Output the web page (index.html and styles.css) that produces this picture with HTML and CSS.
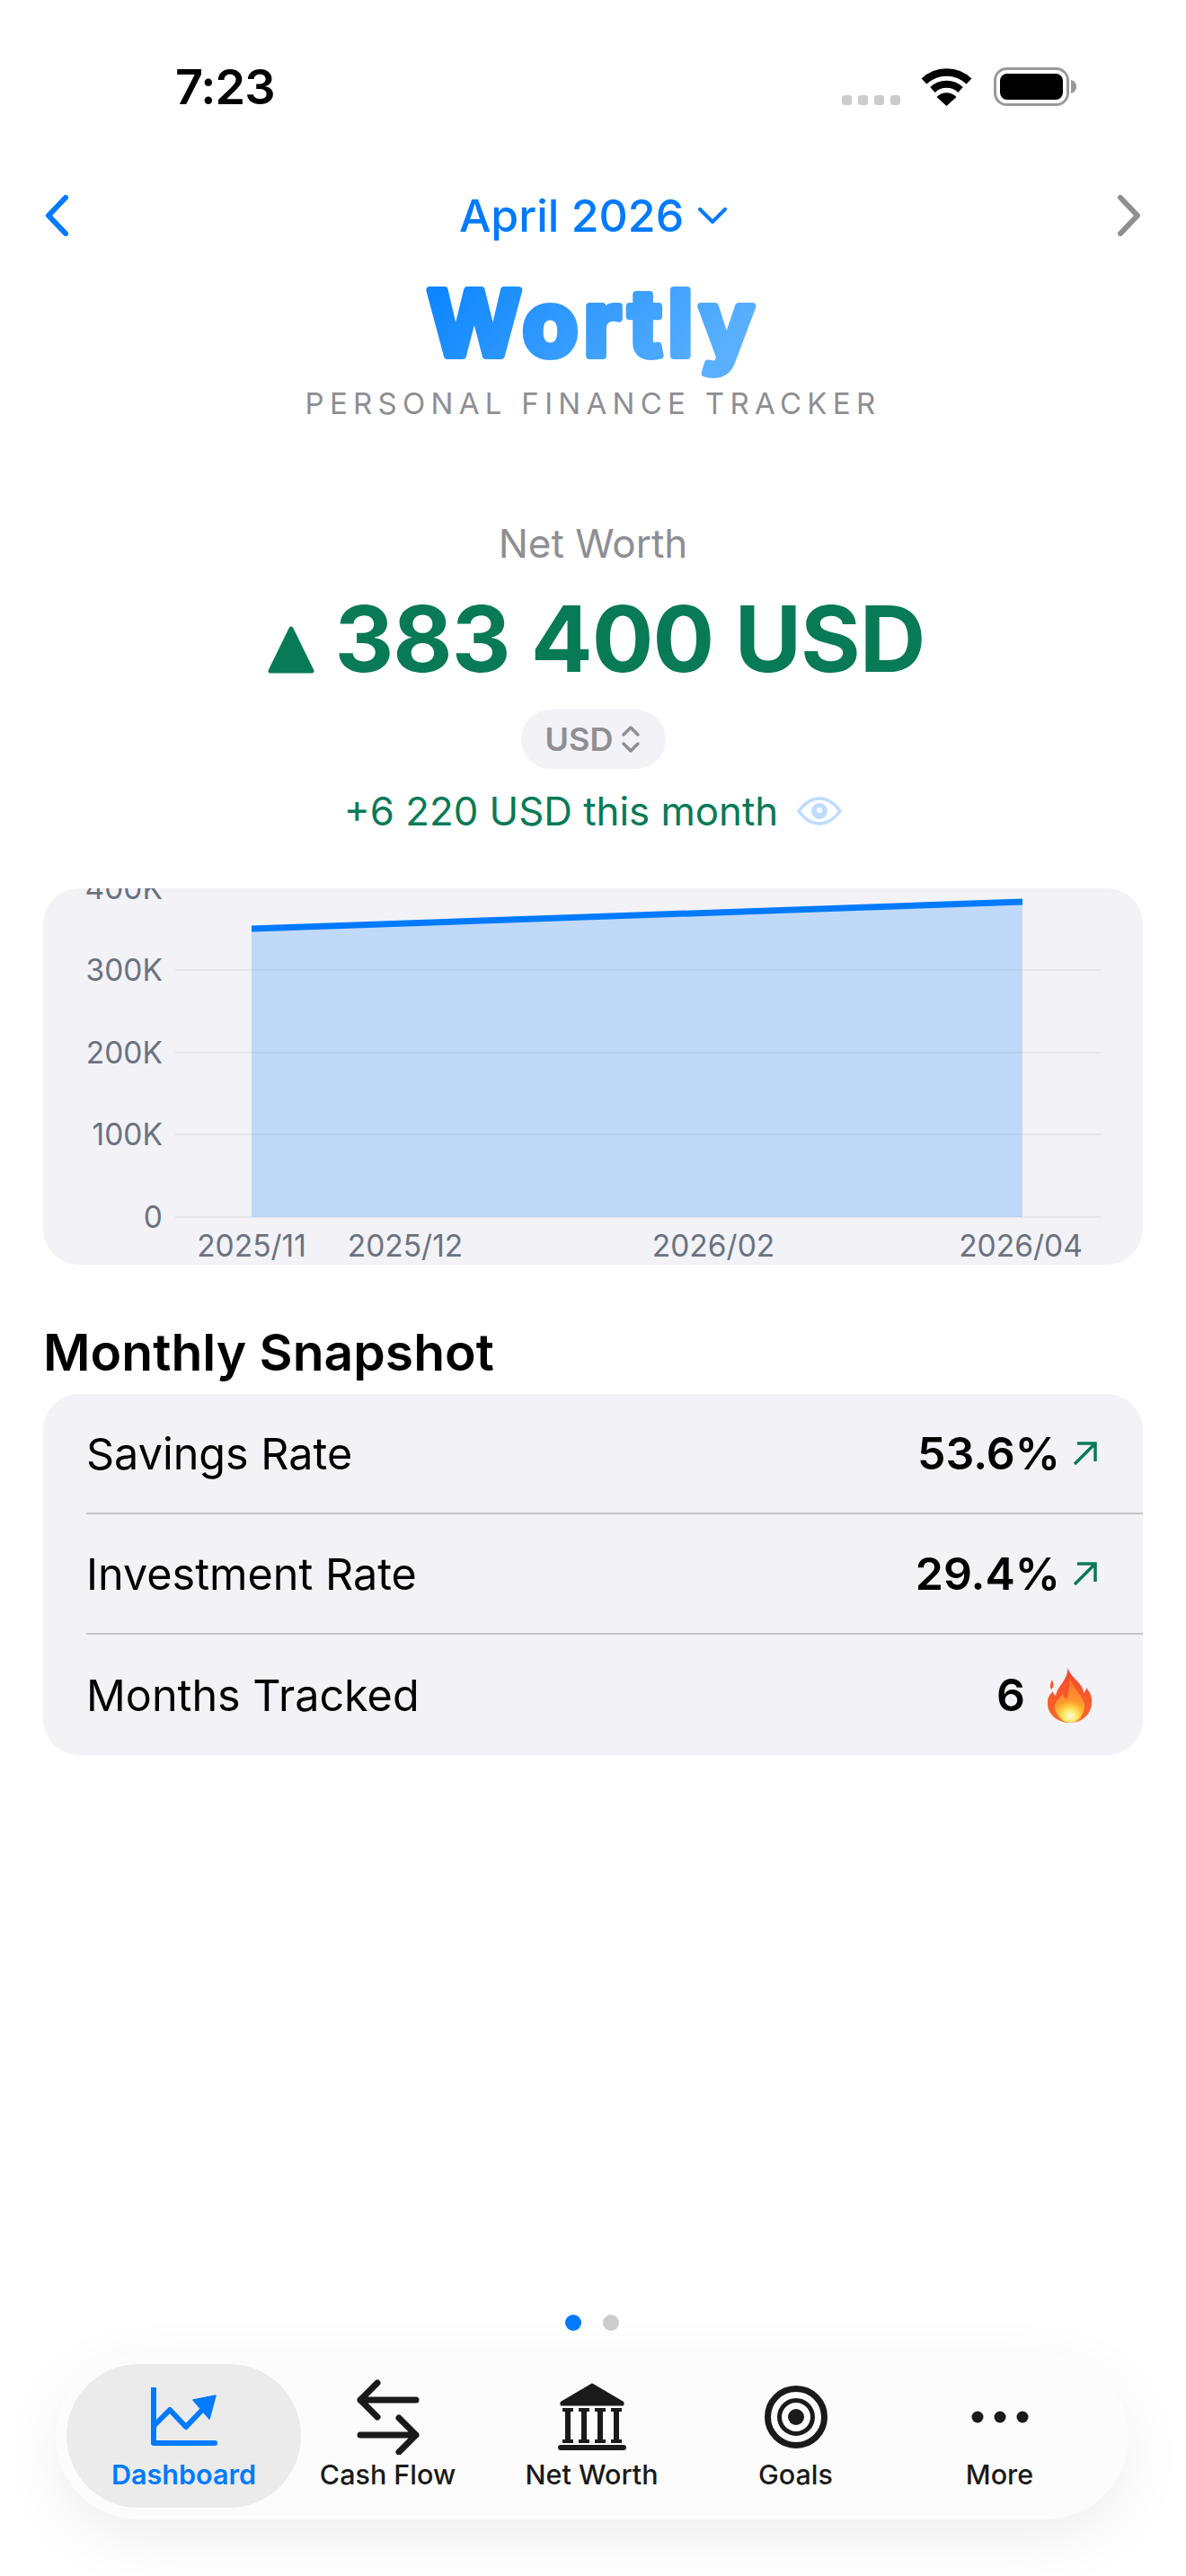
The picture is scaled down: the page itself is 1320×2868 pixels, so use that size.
FILE: index.html
```html
<!DOCTYPE html>
<html lang="en">
<head>
  <meta charset="UTF-8">
  <title>Wortly</title>
  <meta name="viewport" content="width=device-width, initial-scale=1.0">
  <link rel="stylesheet" href="styles.css">
</head>
<body>
<div id="screen">

  <div id="status-bar">
    <span class="time">7:23</span>
    <div class="status-icons">
      <div class="cell-dots"><i></i><i></i><i></i><i></i></div>
      <svg class="wifi" width="57" height="43" viewBox="0 0 57 43">
        <path d="M3.5 15.5 A36 36 0 0 1 53.5 15.5" fill="none" stroke="#000" stroke-width="8.5"/>
        <path d="M13 25 A22.5 22.5 0 0 1 44 25" fill="none" stroke="#000" stroke-width="8"/>
        <path d="M17.5 33 A15 15 0 0 1 39.5 33 L28.5 43 Z" fill="#000"/>
      </svg>
      <svg class="battery" width="92" height="43" viewBox="0 0 92 43">
        <rect x="1.5" y="1.5" width="81" height="40" rx="13" fill="none" stroke="#999" stroke-width="3"/>
        <rect x="7" y="7" width="70" height="29" rx="8" fill="#000"/>
        <path d="M86 14 C90 15 92 18 92 21.5 C92 25 90 28 86 29 Z" fill="#999"/>
      </svg>
    </div>
  </div>

  <div id="month-nav">
    <svg width="26" height="46" viewBox="0 0 26 46"><path d="M23 3 L4 23 L23 43" class="chev blue"/></svg>
    <div class="month-title">
      <span>April 2026</span>
      <svg width="32" height="18" viewBox="0 0 32 18"><path d="M2 2 L16 16 L30 2" class="chev-thin blue"/></svg>
    </div>
    <svg width="26" height="46" viewBox="0 0 26 46"><path d="M3 3 L22 23 L3 43" class="chev gray"/></svg>
  </div>

  <div id="brand">
    <svg class="logo" width="420" height="140" viewBox="0 0 420 140">
      <defs>
        <linearGradient id="logo-grad" x1="0" y1="0.1" x2="1" y2="0.4">
          <stop offset="0" stop-color="#0a84ff"/>
          <stop offset="1" stop-color="#5ab0ff"/>
        </linearGradient>
      </defs>
      <text x="211" y="108" text-anchor="middle" class="logo-text" fill="url(#logo-grad)" stroke="url(#logo-grad)">Wortly</text>
    </svg>
    <div class="tagline">PERSONAL FINANCE TRACKER</div>
  </div>

  <div id="summary">
    <div class="summary-label">Net Worth</div>
    <div class="summary-value">
      <svg width="52" height="54" viewBox="0 0 52 54"><path d="M26 3 L49 50 H3 Z" fill="#087a56" stroke="#087a56" stroke-width="5" stroke-linejoin="round"/></svg>
      <span>383 400 USD</span>
    </div>
    <div class="currency-pill">
      <span>USD</span>
      <svg width="22" height="32" viewBox="0 0 22 32"><path d="M3 11 L11 3 L19 11 M3 21 L11 29 L19 21" fill="none" stroke="#8e8e93" stroke-width="3.5" stroke-linecap="round" stroke-linejoin="round"/></svg>
    </div>
    <div class="summary-change">
      <span>+6 220 USD this month</span>
      <svg width="50" height="32" viewBox="0 0 50 32">
        <path d="M2 16 C10 5 17 2 25 2 C33 2 40 5 48 16 C40 27 33 30 25 30 C17 30 10 27 2 16 Z" fill="none" stroke="#bedcff" stroke-width="3.5"/>
        <circle cx="25" cy="16" r="9" fill="#bedcff"/>
        <circle cx="25" cy="15" r="3" fill="#fff"/>
      </svg>
    </div>
  </div>

  <div id="chart-card">
    <svg width="1224" height="419" viewBox="0 0 1224 419">
      <g class="grid">
        <line x1="147" y1="91" x2="1177" y2="91"/>
        <line x1="147" y1="183" x2="1177" y2="183"/>
        <line x1="147" y1="274" x2="1177" y2="274"/>
        <line x1="147" y1="366" x2="1177" y2="366"/>
      </g>
      <path d="M232 45 L1090 15 V366 H232 Z" fill="#007aff" fill-opacity="0.2"/>
      <path d="M232 45 L1090 15" fill="none" stroke="#007aff" stroke-width="7"/>
      <g class="axis-y">
        <text x="133" y="12">400K</text>
        <text x="133" y="103">300K</text>
        <text x="133" y="195">200K</text>
        <text x="133" y="286">100K</text>
        <text x="133" y="378">0</text>
      </g>
      <g class="axis-x">
        <text x="232" y="410">2025/11</text>
        <text x="403" y="410">2025/12</text>
        <text x="746" y="410">2026/02</text>
        <text x="1088" y="410">2026/04</text>
      </g>
    </svg>
  </div>

  <h2 class="section-title">Monthly Snapshot</h2>

  <div id="snapshot">
    <div class="row">
      <span class="row-label">Savings Rate</span>
      <span class="row-value">53.6%</span>
      <svg class="trend" width="28" height="28" viewBox="0 0 28 28"><path d="M2 26 L25 3 M5 3 H25 V23" fill="none" stroke="#087a56" stroke-width="3.5"/></svg>
    </div>
    <div class="row">
      <span class="row-label">Investment Rate</span>
      <span class="row-value">29.4%</span>
      <svg class="trend" width="28" height="28" viewBox="0 0 28 28"><path d="M2 26 L25 3 M5 3 H25 V23" fill="none" stroke="#087a56" stroke-width="3.5"/></svg>
    </div>
    <div class="row">
      <span class="row-label">Months Tracked</span>
      <span class="row-value">6</span>
      <svg class="flame" width="50" height="62" viewBox="0 0 50 62">
        <defs>
          <linearGradient id="flame-outer" x1="0" y1="0" x2="0" y2="1">
            <stop offset="0" stop-color="#f4472b"/>
            <stop offset="1" stop-color="#f96a2a"/>
          </linearGradient>
          <linearGradient id="flame-mid" x1="0" y1="0" x2="0" y2="1">
            <stop offset="0" stop-color="#f9702e"/>
            <stop offset="0.6" stop-color="#fd9a2c"/>
            <stop offset="1" stop-color="#ffc83a"/>
          </linearGradient>
          <radialGradient id="flame-core" cx="0.5" cy="0.75" r="0.6">
            <stop offset="0" stop-color="#fffbe0"/>
            <stop offset="0.45" stop-color="#ffe65a"/>
            <stop offset="1" stop-color="#ffc23a" stop-opacity="0"/>
          </radialGradient>
        </defs>
        <path d="M5 14 C6 18 8 21 4 25 C2 22 3 18 5 14 Z" fill="#f4572b"/>
        <path d="M22 0 C24 9 33 14 38 22 C39 24 40 26 40 29 C42 27 43 25 43 23 C47 28 50 33 49 41 C48 53 38 62 25 62 C12 62 1 54 0 42 C-1 34 3 30 6 27 C6 29 7 31 9 32 C11 20 24 14 22 0 Z" fill="url(#flame-outer)"/>
        <path d="M25 12 C27 22 38 30 41 41 C42 52 34 60 25 60 C15 60 7 52 8 43 C9 37 15 34 17 29 C18 33 19 35 21 36 C24 30 24 20 25 12 Z" fill="url(#flame-mid)"/>
        <ellipse cx="25" cy="47" rx="15" ry="15" fill="url(#flame-core)"/>
      </svg>
    </div>
  </div>

  <div id="bottom-nav">
    <div class="page-dots"><i class="on"></i><i></i></div>
    <div class="tab-bar">
      <div class="tab active">
        <div class="tab-icon">
          <svg width="74" height="66" viewBox="0 0 74 66">
            <path d="M3 1 V62 H71" fill="none" stroke="currentColor" stroke-width="6" stroke-linecap="round" stroke-linejoin="round"/>
            <path d="M3 43 L21 25 L39 44 L58 24" fill="none" stroke="currentColor" stroke-width="6" stroke-linejoin="round"/>
            <path d="M72 9 L47 14 L65 35 Z" fill="currentColor" stroke="currentColor" stroke-width="1.5" stroke-linejoin="round"/>
          </svg>
        </div>
        <span class="tab-label">Dashboard</span>
      </div>
      <div class="tab">
        <div class="tab-icon">
          <svg width="70" height="84" viewBox="0 0 70 84">
            <path d="M66 23 H4 M23 4 L4 23 L23 42" fill="none" stroke="currentColor" stroke-width="7" stroke-linecap="round" stroke-linejoin="round"/>
            <path d="M4 62 H66 M47 43 L66 62 L47 81" fill="none" stroke="currentColor" stroke-width="7" stroke-linecap="round" stroke-linejoin="round"/>
          </svg>
        </div>
        <span class="tab-label">Cash Flow</span>
      </div>
      <div class="tab">
        <div class="tab-icon">
          <svg width="78" height="75" viewBox="0 0 78 75">
            <path d="M39 2 L73 22 V24 H5 V22 Z" fill="currentColor" stroke="currentColor" stroke-width="3" stroke-linejoin="round"/>
            <g fill="none" stroke="currentColor">
              <path d="M6 30 H18 M24 30 H36 M42 30 H54 M60 30 H72 M6 65 H18 M24 65 H36 M42 65 H54 M60 65 H72" stroke-width="4"/>
              <path d="M12 30 V65 M30 30 V65 M48 30 V65 M66 30 V65" stroke-width="6"/>
            </g>
            <rect x="1" y="69" width="76" height="6" rx="3" fill="currentColor"/>
          </svg>
        </div>
        <span class="tab-label">Net Worth</span>
      </div>
      <div class="tab">
        <div class="tab-icon">
          <svg width="70" height="70" viewBox="0 0 70 70">
            <circle cx="35" cy="35" r="31.5" fill="none" stroke="currentColor" stroke-width="7"/>
            <circle cx="35" cy="35" r="18.5" fill="none" stroke="currentColor" stroke-width="5"/>
            <circle cx="35" cy="35" r="9" fill="currentColor"/>
          </svg>
        </div>
        <span class="tab-label">Goals</span>
      </div>
      <div class="tab">
        <div class="tab-icon">
          <svg width="64" height="14" viewBox="0 0 64 14">
            <circle cx="7" cy="7" r="6.5" fill="currentColor"/>
            <circle cx="32" cy="7" r="6.5" fill="currentColor"/>
            <circle cx="57" cy="7" r="6.5" fill="currentColor"/>
          </svg>
        </div>
        <span class="tab-label">More</span>
      </div>
    </div>
  </div>

</div>
</body>
</html>
```

FILE: styles.css
```css
:root {
  --blue: #007aff;
  --green: #087a56;
  --gray: #8e8e93;
  --card: #f2f2f7;
}

* { box-sizing: border-box; }

body {
  margin: 0;
  background: #fff;
  font-family: Inter, 'Liberation Sans', sans-serif;
  color: #000;
}

#screen {
  width: 1320px;
  height: 2868px;
  display: flex;
  flex-direction: column;
  overflow: hidden;
}

/* status bar */
#status-bar {
  height: 192px;
  display: flex;
  align-items: center;
  justify-content: space-between;
  padding: 0 122px 0 195px;
}

.time {
  font-size: 54px;
  font-weight: 600;
  letter-spacing: -1px;
}

.status-icons {
  display: flex;
  align-items: flex-end;
  height: 43px;
}

.cell-dots {
  display: flex;
  gap: 7px;
  margin-right: 23px;
  margin-bottom: 1px;
}

.cell-dots i {
  width: 11px;
  height: 11px;
  border-radius: 3px;
  background: #ccc;
}

.wifi { margin-right: 24px; }

/* month switcher */
#month-nav {
  height: 96px;
  display: flex;
  align-items: center;
  justify-content: space-between;
  padding: 0 50px 0 50px;
}

.month-title {
  display: flex;
  align-items: center;
  gap: 16px;
  color: var(--blue);
  font-size: 50px;
  font-weight: 500;
}

.chev, .chev-thin {
  fill: none;
  stroke-linecap: round;
  stroke-linejoin: round;
}
.chev { stroke-width: 6; }
.chev-thin { stroke-width: 4; }
.chev.blue, .chev-thin.blue { stroke: var(--blue); }
.chev.gray { stroke: var(--gray); }

/* brand */
#brand {
  display: flex;
  flex-direction: column;
  align-items: center;
}

.logo-text {
  font-family: Inter, sans-serif;
  font-size: 100px;
  font-weight: 700;
  letter-spacing: 7px;
  stroke-width: 8px;
  stroke-linejoin: round;
}

.tagline {
  margin-top: -4px;
  line-height: 50px;
  font-size: 33px;
  letter-spacing: 6.3px;
  color: var(--gray);
}

/* net worth summary */
#summary {
  display: flex;
  flex-direction: column;
  align-items: center;
}

.summary-label {
  margin-top: 101px;
  line-height: 60px;
  font-size: 44px;
  color: var(--gray);
}

.summary-value {
  margin-top: 21px;
  height: 110px;
  display: flex;
  align-items: center;
  gap: 22px;
  padding-left: 8px;
  color: var(--green);
  font-size: 102px;
  font-weight: 700;
  letter-spacing: -1px;
}

.summary-value svg { margin-top: 25px; }

.currency-pill {
  margin-top: 24px;
  width: 161px;
  height: 66px;
  display: flex;
  align-items: center;
  justify-content: center;
  gap: 9px;
  background: var(--card);
  border-radius: 33px;
  color: var(--gray);
  font-size: 36px;
  font-weight: 600;
}

.summary-change {
  margin-top: 19px;
  height: 56px;
  display: flex;
  align-items: center;
  gap: 21px;
  color: var(--green);
  font-size: 43.8px;
}

/* chart */
#chart-card {
  margin: 58px 48px 0;
  height: 419px;
  background: var(--card);
  border-radius: 40px;
  overflow: hidden;
}

#chart-card svg { display: block; }

.grid line {
  stroke: #e5e6ea;
  stroke-width: 2;
}

.axis-y text, .axis-x text {
  font-size: 33.5px;
  fill: #6b7280;
}
.axis-y text { text-anchor: end; }
.axis-x text { text-anchor: middle; }

/* monthly snapshot */
.section-title {
  margin: 62px 48px 0;
  line-height: 71px;
  font-size: 57px;
  font-weight: 600;
}

#snapshot {
  margin: 11px 48px 0;
  background: var(--card);
  border-radius: 40px;
  padding-left: 48px;
}

.row {
  height: 134px;
  display: flex;
  align-items: center;
  gap: 14px;
  padding-right: 50px;
  font-size: 48.5px;
  border-bottom: 2px solid #c6c6c8;
}

.row:last-child { border-bottom: none; }

.row-label { margin-right: auto; }

.row-value {
  font-size: 50px;
  font-weight: 600;
}

.flame {
  margin-left: 11px;
  margin-right: 6px;
}

/* bottom navigation */
#bottom-nav {
  margin-top: auto;
  padding: 0 64px 63px 62px;
}

.page-dots {
  display: flex;
  justify-content: center;
  gap: 24px;
  margin-bottom: 25px;
}

.page-dots i {
  width: 18px;
  height: 18px;
  border-radius: 50%;
  background: #ccc;
}

.page-dots i.on { background: var(--blue); }

.tab-bar {
  height: 185px;
  display: flex;
  padding: 12px 29px 13px;
  background: #fcfcfc;
  border-radius: 92px;
  box-shadow: 0 20px 70px rgba(0, 0, 0, 0.07);
}

.tab {
  width: 227px;
  height: 160px;
  display: flex;
  flex-direction: column;
  align-items: center;
  padding-top: 12px;
  color: #1a1a1a;
}

.tab.active {
  width: 261px;
  margin: 0 -17px;
  background: #ebebeb;
  border-radius: 80px;
  color: var(--blue);
}

.tab-icon {
  height: 93px;
  display: flex;
  align-items: center;
  justify-content: center;
}

.tab-label {
  line-height: 36px;
  font-size: 30.5px;
  font-weight: 500;
}

.tab.active .tab-label { font-weight: 600; }
```
